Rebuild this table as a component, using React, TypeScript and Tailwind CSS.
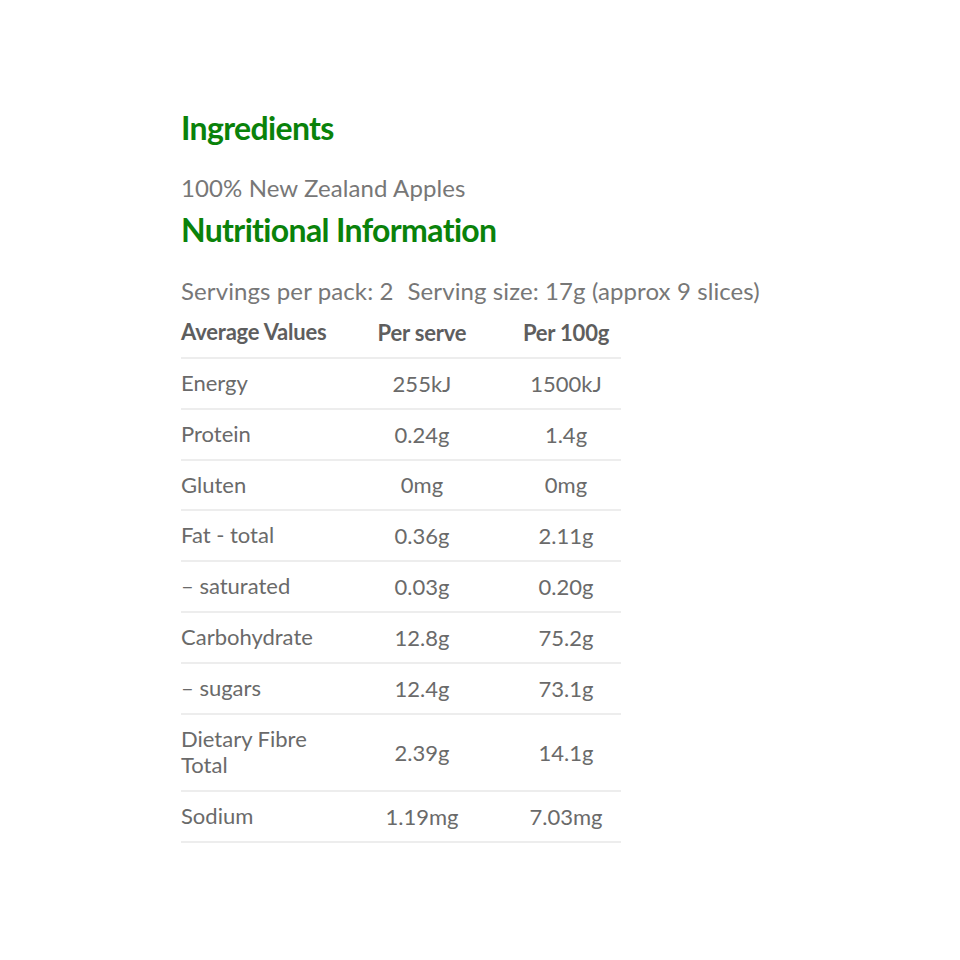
const rows: { name: string; serve: string; per100: string }[] = [
  { name: "Energy", serve: "255kJ", per100: "1500kJ" },
  { name: "Protein", serve: "0.24g", per100: "1.4g" },
  { name: "Gluten", serve: "0mg", per100: "0mg" },
  { name: "Fat - total", serve: "0.36g", per100: "2.11g" },
  { name: "– saturated", serve: "0.03g", per100: "0.20g" },
  { name: "Carbohydrate", serve: "12.8g", per100: "75.2g" },
  { name: "– sugars", serve: "12.4g", per100: "73.1g" },
  { name: "Dietary Fibre Total", serve: "2.39g", per100: "14.1g" },
  { name: "Sodium", serve: "1.19mg", per100: "7.03mg" },
];

export default function App() {
  return (
    <div className="min-h-screen bg-white font-['Lato',sans-serif] text-[#777]">
      <div className="pl-[181px] pt-[108px]">
        {/* Ingredients */}
        <h2 className="text-[32px] font-bold leading-[40px] tracking-[-0.65px] text-[#0a820a]">
          Ingredients
        </h2>
        <p className="mt-[25px] text-[24px] leading-[30px] tracking-[0.1px]">100% New Zealand Apples</p>

        {/* Nutrition */}
        <h2 className="mt-[7px] text-[32px] font-bold leading-[40px] tracking-[-0.65px] text-[#0a820a]">
          Nutritional Information
        </h2>
        <p className="mt-[26px] text-[24px] leading-[30px] tracking-[0.1px]">
          <span>Servings per pack: 2</span>
          <span className="ml-[14px]">Serving size: 17g (approx 9 slices)</span>
        </p>

        <table className="mt-[2px] w-[440px] table-fixed border-collapse text-[22px] text-[#6a6a6a]">
          <colgroup>
            <col className="w-[152px]" />
            <col className="w-[178px]" />
            <col className="w-[110px]" />
          </colgroup>
          <thead>
            <tr className="border-b-2 border-[#ededed]">
              <th className="pt-[11px] pb-[12px] text-left font-bold leading-[26px] tracking-[-0.2px] text-[#5e5e5e]">
                Average Values
              </th>
              <th className="text-center font-bold tracking-[-0.2px] text-[#5e5e5e]">Per serve</th>
              <th className="text-center font-bold tracking-[-0.2px] text-[#5e5e5e]">Per 100g</th>
            </tr>
          </thead>
          <tbody>
            {rows.map((r) => (
              <tr key={r.name} className="border-b-2 border-[#ededed]">
                <td className="py-[11px] pr-2 leading-[26.8px]">{r.name}</td>
                <td className="text-center">{r.serve}</td>
                <td className="text-center">{r.per100}</td>
              </tr>
            ))}
          </tbody>
        </table>
      </div>
    </div>
  );
}
